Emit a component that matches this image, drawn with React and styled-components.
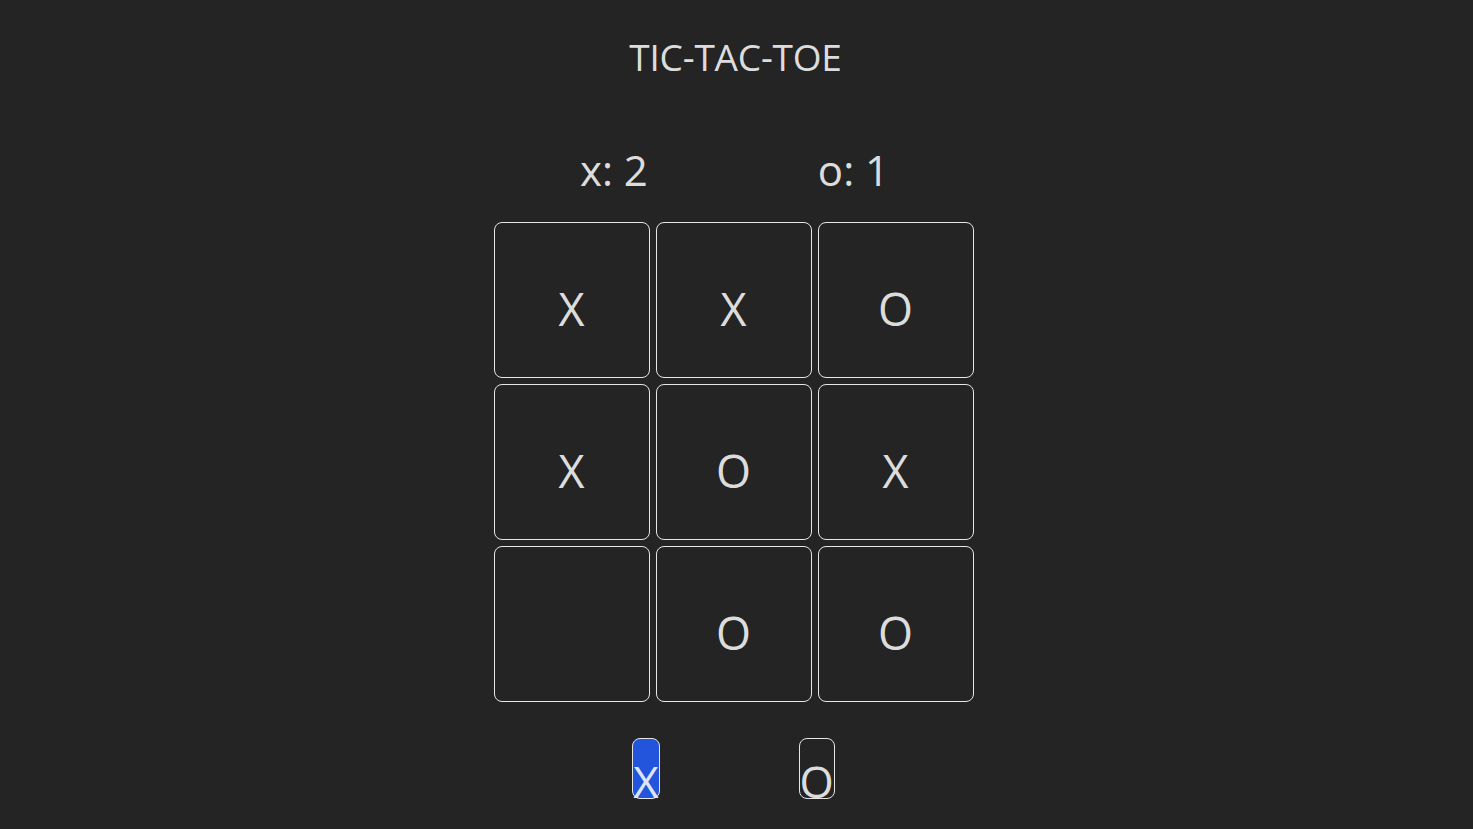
import React, { useState } from "react";
import styled, { createGlobalStyle } from "styled-components";

const GlobalStyle = createGlobalStyle`
  body {
    margin: 0;
    background: #242424;
    color: rgba(255, 255, 255, 0.87);
    font-family: "Open Sans", "Noto Sans", sans-serif;
  }
`;

const board = ["X", "X", "O", "X", "O", "X", "", "O", "O"];

const App = () => {
  const [player, setPlayer] = useState("X");

  return (
    <>
      <GlobalStyle />
      <Page>
        <Title>TIC-TAC-TOE</Title>
        <Scores>
          <Score>x: 2</Score>
          <Score>o: 1</Score>
        </Scores>
        <Board>
          {board.map((v, i) => (
            <Cell key={i}>{v}</Cell>
          ))}
        </Board>
        <Picker>
          <PickButton active={player === "X"} onClick={() => setPlayer("X")}>
            X
          </PickButton>
          <PickButton active={player === "O"} onClick={() => setPlayer("O")}>
            O
          </PickButton>
        </Picker>
      </Page>
    </>
  );
};

export default App;

const Page = styled.div`
  display: flex;
  flex-direction: column;
  align-items: center;
  padding-top: 33px;
`;

const Title = styled.h1`
  margin: 0 2px 0 0;
  font-size: 37px;
  font-weight: 400;
  line-height: 48px;
  letter-spacing: -0.2px;
`;

const Scores = styled.div`
  display: flex;
  gap: 170px;
  margin-top: 59px;
  margin-right: 4px;
`;

const Score = styled.div`
  font-size: 42px;
  line-height: 60px;
`;

const Board = styled.div`
  display: grid;
  grid-template-columns: repeat(3, 156px);
  grid-auto-rows: 156px;
  gap: 6px;
  margin-top: 22px;
  margin-right: 6px;
`;

const Cell = styled.div`
  box-sizing: border-box;
  border: 1px solid #e6e6e6;
  border-radius: 8px;
  display: flex;
  align-items: center;
  justify-content: center;
  font-size: 45px;
  padding-top: 16px;
`;

const Picker = styled.div`
  display: flex;
  gap: 139px;
  margin-top: 36px;
  margin-right: 6px;
`;

const PickButton = styled.button`
  box-sizing: border-box;
  height: 61px;
  padding: 22px 0 0;
  border: 1px solid #e6e6e6;
  border-radius: 8px;
  background: ${({ active }) => (active ? "#2254dc" : "transparent")};
  color: rgba(255, 255, 255, 0.87);
  font-family: "Open Sans", "Noto Sans", sans-serif;
  font-size: 44px;
  line-height: 40px;
  overflow: visible;
  cursor: pointer;
`;
